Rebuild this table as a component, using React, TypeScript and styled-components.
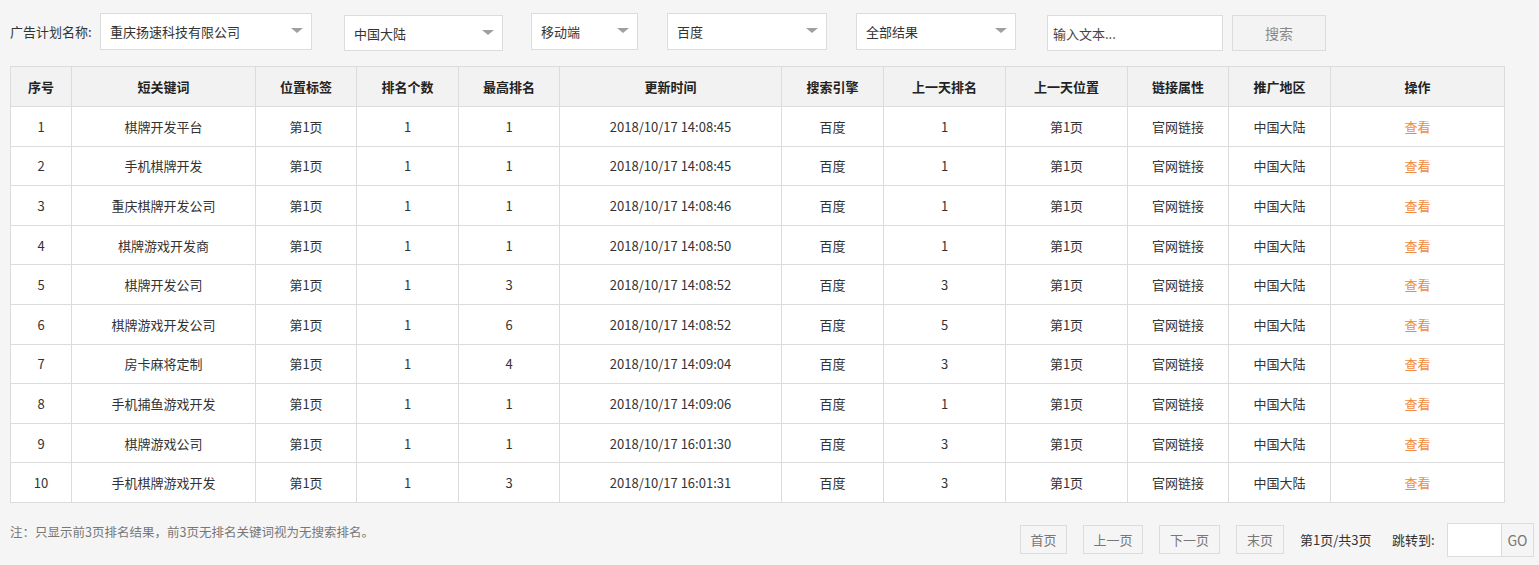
import React from "react";
import styled, { createGlobalStyle } from "styled-components";

const GlobalStyle = createGlobalStyle`
  html, body { margin: 0; padding: 0; background: #f5f5f5; }
  body {
    font-family: "Noto Sans CJK SC", "Noto Sans", sans-serif;
    font-size: 13px;
    color: #333;
  }
  * { box-sizing: border-box; }
`;

const Page = styled.div`
  padding: 0 5px 0 10px;
`;

const Toolbar = styled.div`
  display: flex;
  align-items: flex-start;
  padding-top: 13px;
  height: 66px;
`;

const Label = styled.span`
  width: 90px;
  height: 37px;
  line-height: 37px;
  font-size: 13px;
  color: #333;
  white-space: nowrap;
`;

const Select = styled.div<{ $w: number; $top?: number; $h?: number; $gap?: number }>`
  display: flex;
  align-items: center;
  justify-content: space-between;
  width: ${(p) => p.$w}px;
  height: ${(p) => p.$h ?? 37}px;
  margin-top: ${(p) => p.$top ?? 0}px;
  margin-right: ${(p) => p.$gap ?? 29}px;
  padding: 0 8px 0 9px;
  background: #fff;
  border: 1px solid #dcdcdc;
  color: #333;
  font-size: 13px;
`;

const Caret = styled.span`
  width: 0;
  height: 0;
  border-left: 6px solid transparent;
  border-right: 6px solid transparent;
  border-top: 5px solid #a0a0a0;
  margin-top: -2px;
`;

const TextInput = styled.div`
  display: flex;
  align-items: center;
  width: 176px;
  height: 36px;
  margin-top: 2px;
  margin-right: 9px;
  padding: 0 5px;
  background: #fff;
  border: 1px solid #dcdcdc;
  color: #444;
  font-size: 13px;
`;

const SearchButton = styled.div`
  display: flex;
  align-items: center;
  justify-content: center;
  width: 94px;
  height: 36px;
  margin-top: 2px;
  background: #f3f3f3;
  border: 1px solid #dcdcdc;
  color: #888;
  font-size: 14px;
`;

const Table = styled.table`
  width: 1495px;
  border-collapse: collapse;
  table-layout: fixed;
  background: #fff;
`;

const Th = styled.th`
  height: 40px;
  border: 1px solid #dcdcdc;
  background: #f2f2f2;
  font-weight: bold;
  font-size: 13px;
  color: #222;
  text-align: center;
  padding: 0;
`;

const Td = styled.td`
  height: 39.6px;
  border: 1px solid #dcdcdc;
  text-align: center;
  font-size: 13px;
  color: #333;
  padding: 0;
`;

const ViewLink = styled.span`
  color: #f18a3d;
  cursor: pointer;
`;

const Footer = styled.div`
  display: flex;
  justify-content: space-between;
  align-items: center;
  margin-top: 20px;
  height: 34px;
`;

const Note = styled.div`
  align-self: flex-start;
  line-height: 18px;
  font-size: 12.5px;
  color: #777;
`;

const Pager = styled.div`
  display: flex;
  align-items: center;
`;

const PageButton = styled.div<{ $w: number }>`
  width: ${(p) => p.$w}px;
  height: 29px;
  line-height: 27px;
  text-align: center;
  margin-right: 16px;
  background: #f5f5f5;
  border: 1px solid #dcdcdc;
  color: #777;
  font-size: 13px;
  white-space: nowrap;
`;

const PagerText = styled.span<{ $w: number; $gap: number }>`
  width: ${(p) => p.$w}px;
  margin-right: ${(p) => p.$gap}px;
  color: #333;
  font-size: 13px;
  white-space: nowrap;
`;

const JumpBox = styled.div`
  width: 55px;
  height: 34px;
  background: #fff;
  border: 1px solid #dcdcdc;
`;

const GoButton = styled.div`
  width: 32px;
  height: 34px;
  line-height: 32px;
  text-align: center;
  background: #f5f5f5;
  border: 1px solid #dcdcdc;
  border-left: none;
  color: #777;
  font-size: 14px;
`;

const columns: [string, number][] = [
  ["序号", 61],
  ["短关键词", 184],
  ["位置标签", 101],
  ["排名个数", 102],
  ["最高排名", 101],
  ["更新时间", 222],
  ["搜索引擎", 102],
  ["上一天排名", 122],
  ["上一天位置", 122],
  ["链接属性", 101],
  ["推广地区", 102],
  ["操作", 174],
];

const rows: [string, string, string, string][] = [
  ["棋牌开发平台", "1", "2018/10/17 14:08:45", "1"],
  ["手机棋牌开发", "1", "2018/10/17 14:08:45", "1"],
  ["重庆棋牌开发公司", "1", "2018/10/17 14:08:46", "1"],
  ["棋牌游戏开发商", "1", "2018/10/17 14:08:50", "1"],
  ["棋牌开发公司", "3", "2018/10/17 14:08:52", "3"],
  ["棋牌游戏开发公司", "6", "2018/10/17 14:08:52", "5"],
  ["房卡麻将定制", "4", "2018/10/17 14:09:04", "3"],
  ["手机捕鱼游戏开发", "1", "2018/10/17 14:09:06", "1"],
  ["棋牌游戏公司", "1", "2018/10/17 16:01:30", "3"],
  ["手机棋牌游戏开发", "3", "2018/10/17 16:01:31", "3"],
];

export default function App() {
  return (
    <>
      <GlobalStyle />
      <Page>
        <Toolbar>
          <Label>广告计划名称:</Label>
          <Select $w={212} $gap={32}>
            <span>重庆扬速科技有限公司</span>
            <Caret />
          </Select>
          <Select $w={159} $top={2} $h={36} $gap={28}>
            <span>中国大陆</span>
            <Caret />
          </Select>
          <Select $w={107}>
            <span>移动端</span>
            <Caret />
          </Select>
          <Select $w={160}>
            <span>百度</span>
            <Caret />
          </Select>
          <Select $w={160} $gap={31}>
            <span>全部结果</span>
            <Caret />
          </Select>
          <TextInput>输入文本...</TextInput>
          <SearchButton>搜索</SearchButton>
        </Toolbar>
        <Table>
          <colgroup>
            {columns.map(([, w], i) => (
              <col key={i} style={{ width: w }} />
            ))}
          </colgroup>
          <thead>
            <tr>
              {columns.map(([name], i) => (
                <Th key={i}>{name}</Th>
              ))}
            </tr>
          </thead>
          <tbody>
            {rows.map(([kw, best, time, prev], i) => (
              <tr key={i}>
                <Td>{i + 1}</Td>
                <Td>{kw}</Td>
                <Td>第1页</Td>
                <Td>1</Td>
                <Td>{best}</Td>
                <Td>{time}</Td>
                <Td>百度</Td>
                <Td>{prev}</Td>
                <Td>第1页</Td>
                <Td>官网链接</Td>
                <Td>中国大陆</Td>
                <Td>
                  <ViewLink>查看</ViewLink>
                </Td>
              </tr>
            ))}
          </tbody>
        </Table>
        <Footer>
          <Note>注：只显示前3页排名结果，前3页无排名关键词视为无搜索排名。</Note>
          <Pager>
            <PageButton $w={47}>首页</PageButton>
            <PageButton $w={60}>上一页</PageButton>
            <PageButton $w={61}>下一页</PageButton>
            <PageButton $w={48}>末页</PageButton>
            <PagerText $w={76} $gap={16}>第1页/共3页</PagerText>
            <PagerText $w={46} $gap={9}>跳转到:</PagerText>
            <JumpBox />
            <GoButton>GO</GoButton>
          </Pager>
        </Footer>
      </Page>
    </>
  );
}
